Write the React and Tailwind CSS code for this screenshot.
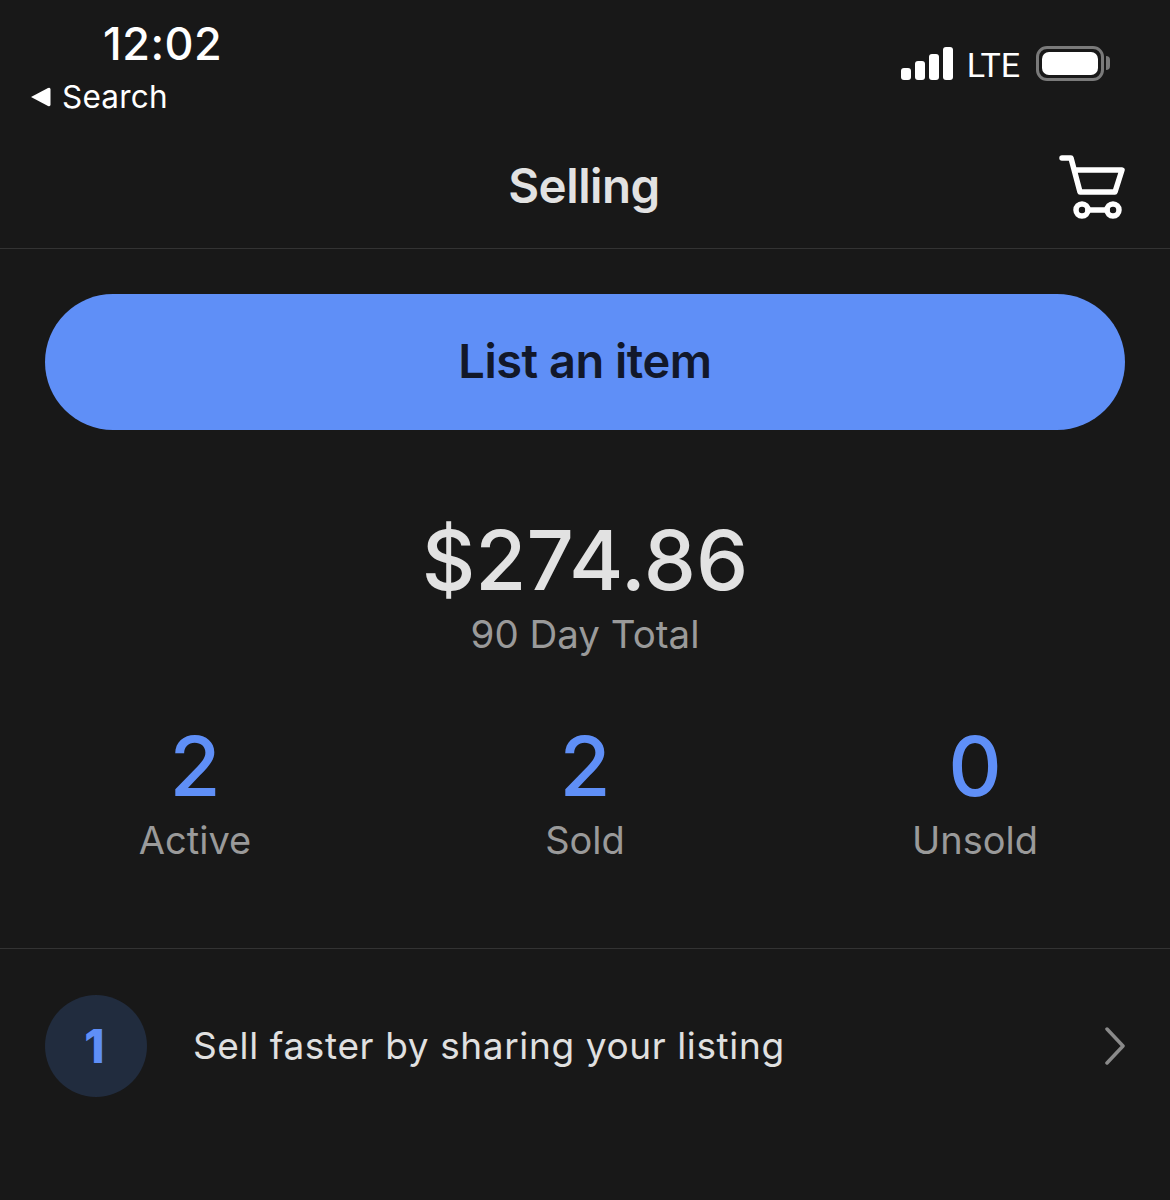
export default function App() {
  return (
    <div className="w-[1170px] h-[1200px] bg-[#181818] overflow-hidden flex flex-col font-['Inter','Roboto',sans-serif]">
      <div className="h-[135px] flex justify-between shrink-0">
        <div className="pl-[30px] pt-[17px] flex flex-col">
          <div className="pl-[73px] text-[45px] leading-[54px] font-medium text-white tracking-[0.5px]">12:02</div>
          <div className="flex items-center gap-[11px]">
            <svg width="21" height="22" viewBox="0 0 21 22"><path d="M1 11 L18 2 Q20.500 1 20.500 3.500 L20.500 18.500 Q20.500 21 18 20 Z" fill="#fff" /></svg>
            <span className="text-[31.500px] leading-[52px] text-white tracking-[0.2px]">Search</span>
          </div>
        </div>
        <div className="pt-[46px] pr-[66px] flex items-start">
          <svg width="54" height="35" viewBox="0 0 54 35" fill="#fff">
            <rect x="1" y="22" width="10" height="12" rx="3" />
            <rect x="15" y="15" width="10" height="19" rx="3" />
            <rect x="29" y="8" width="10" height="26" rx="3" />
            <rect x="43" y="1" width="10" height="33" rx="3" />
          </svg>
          <span className="ml-[13px] text-[34px] leading-[38px] text-white font-normal font-['Roboto',sans-serif]">LTE</span>
          <div className="ml-[16px] w-[68px] h-[35px] rounded-[11px] border-[3px] border-[#7a7a7a] p-[3px] relative">
            <div className="w-full h-full bg-white rounded-[7px]" />
            <div className="absolute left-[67px] top-[7px] w-[4px] h-[14px] bg-[#7a7a7a] rounded-r-[4px]" />
          </div>
        </div>
      </div>

      <div className="h-[114px] shrink-0 border-b border-[#333333] relative flex items-center justify-center">
        <span className="text-[47.500px] font-semibold text-[#e2e2e2] -mt-[11px] tracking-[-0.5px] pr-[2px]">Selling</span>
        <svg className="absolute left-[1059px] top-[19px]" width="68" height="66" viewBox="0 0 68 66" fill="none" stroke="#fff" strokeWidth="5.500" strokeLinejoin="round" strokeLinecap="round">
          <path d="M3 4 H12 L21 38 H56 L63 16 H16" />
          <circle cx="23" cy="56" r="6" />
          <circle cx="54" cy="56" r="6" />
          <path d="M29 56 H48" />
        </svg>
      </div>

      <div className="px-[45px] pt-[45px] shrink-0">
        <div className="h-[136px] rounded-full bg-[#5f8ff7] flex items-center justify-center text-[47px] font-semibold text-[#12182a] tracking-[-0.5px] pb-[2px]">List an item</div>
      </div>

      <div className="flex flex-col items-center pt-[80px] shrink-0">
        <div className="text-[83px] leading-[100px] text-[#e2e2e2] font-[450]">$274.86</div>
        <div className="text-[38.500px] leading-[46px] mt-[1px] text-[#9a9a9a]">90 Day Total</div>
      </div>

      <div className="grid grid-cols-3 pt-[59px] shrink-0 h-[292px] border-b border-[#333333]">
        {[["2", "Active"], ["2", "Sold"], ["0", "Unsold"]].map(([n, l]) => (
          <div key={l} className="flex flex-col items-center">
            <div className="text-[83px] leading-[100px] text-[#5f8ff7] font-[450]">{n}</div>
            <div className="text-[38px] leading-[46px] mt-[1px] text-[#9a9a9a]">{l}</div>
          </div>
        ))}
      </div>

      <div className="flex items-center pl-[45px] pr-[45px] pt-[46px]">
        <div className="w-[102px] h-[102px] rounded-full bg-[#212c3e] flex items-center justify-center text-[46px] font-extrabold text-[#5f8ff7] pr-[3px]">1</div>
        <div className="ml-[46px] text-[37px] text-[#e0e0e0] tracking-[0.62px]">Sell faster by sharing your listing</div>
        <svg className="ml-auto" width="20" height="40" viewBox="0 0 20 40" fill="none" stroke="#8a8a8a" strokeWidth="3.500" strokeLinecap="round" strokeLinejoin="round"><path d="M2 3 L18 20 L2 37" /></svg>
      </div>
    </div>
  );
}
